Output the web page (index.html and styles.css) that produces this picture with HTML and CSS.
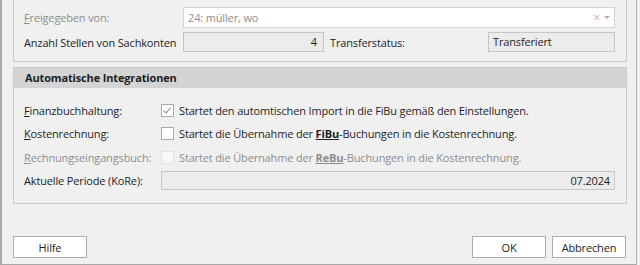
FILE: index.html
```html
<!DOCTYPE html>
<html lang="de">
<head>
  <meta charset="UTF-8" />
  <title>Transfer</title>
  <link rel="stylesheet" href="styles.css">
</head>
<body>
  <div class="window">
    <div class="group group-top">
      <div class="row">
        <label class="label disabled"><u>F</u>reigegeben von:</label>
        <div class="combo">
          <span class="combo-text">24: müller, wo</span>
          <span class="combo-clear">×</span>
          <span class="combo-arrow"></span>
        </div>
      </div>
      <div class="row">
        <label class="label">Anzahl Stellen von Sachkonten</label>
        <div class="field field-num">4</div>
        <label class="label-mid">Transferstatus:</label>
        <div class="field field-status">Transferiert</div>
      </div>
    </div>

    <div class="group group-auto">
      <div class="group-header">Automatische Integrationen</div>
      <div class="group-body">
        <div class="row row-check">
          <label class="label label-short"><u>F</u>inanzbuchhaltung:</label>
          <span class="check checked"></span>
          <span class="check-text">Startet den automtischen Import in die FiBu gemäß den Einstellungen.</span>
        </div>
        <div class="row row-check">
          <label class="label label-short"><u>K</u>ostenrechnung:</label>
          <span class="check"></span>
          <span class="check-text">Startet die Übernahme der <b><u>FiBu</u></b>-Buchungen in die Kostenrechnung.</span>
        </div>
        <div class="row row-check disabled">
          <label class="label label-short"><u>R</u>echnungseingangsbuch:</label>
          <span class="check check-off"></span>
          <span class="check-text">Startet die Übernahme der <b><u>ReBu</u></b>-Buchungen in die Kostenrechnung.</span>
        </div>
        <div class="row row-check">
          <label class="label label-short">Aktuelle Periode (KoRe):</label>
          <div class="field field-period">07.2024</div>
        </div>
      </div>
    </div>

    <div class="buttons">
      <button class="btn">Hilfe</button>
      <span class="spacer"></span>
      <button class="btn">OK</button>
      <button class="btn">Abbrechen</button>
    </div>
  </div>
</body>
</html>
```

FILE: styles.css
```css
html, body {
  margin: 0;
  padding: 0;
  background: #f0f0f0;
  font-family: "Open Sans", "Liberation Sans", sans-serif;
  font-size: 11px;
  letter-spacing: -0.15px;
  color: #1e1e1e;
}
.window {
  box-sizing: border-box;
  width: 637px;
  height: 265px;
  padding: 0 10px 0 11px;
  border-left: 2px solid #a8a8a8;
  border-right: 1px solid #b4b4b4;
  border-bottom: 1px solid #a8a8a8;
  background: #f0f0f0;
}
.group {
  box-sizing: border-box;
  width: 614px;
  border: 1px solid #cbcbcb;
}
.group-top {
  border-top: none;
  height: 62px;
  padding: 7px 11px 0 10px;
  display: flex;
  flex-direction: column;
  gap: 4px;
}
.row {
  display: flex;
  align-items: center;
}
.label {
  width: 159px;
  flex: none;
  white-space: nowrap;
}
.label-short {
  width: 137px;
}
.disabled,
.disabled .check-text {
  color: #8d8d8d;
}
.combo {
  box-sizing: border-box;
  flex: 1;
  height: 21px;
  display: flex;
  align-items: center;
  background: #fff;
  border: 1px solid #d2d2d2;
  padding: 0 4px 0 4px;
}
.combo-text {
  flex: 1;
  color: #8d8d8d;
}
.combo-clear {
  color: #e8a0a0;
  font-size: 12px;
  margin-right: 4px;
}
.combo-arrow {
  width: 0;
  height: 0;
  border-left: 3px solid transparent;
  border-right: 3px solid transparent;
  border-top: 3px solid #b0b0b0;
}
.field {
  box-sizing: border-box;
  height: 20px;
  line-height: 18px;
  border: 1px solid #c6c6c6;
  background: #ececec;
  padding: 0 4px;
}
.field-num {
  width: 141px;
  text-align: right;
  padding-right: 6px;
}
.label-mid {
  margin-left: 6px;
  width: 158px;
}
.field-status {
  flex: 1;
}
.group-auto {
  margin-top: 5px;
  height: 137px;
}
.group-header {
  height: 20px;
  line-height: 19px;
  background: #d4d4d4;
  font-weight: bold;
  padding-left: 11px;
}
.group-body {
  padding: 11px 11px 0 10px;
  display: flex;
  flex-direction: column;
}
.row-check {
  height: 23.3px;
}
.check {
  box-sizing: border-box;
  width: 13px;
  height: 13px;
  border: 1px solid #a9a9a9;
  background: #fff;
  margin-right: 5px;
  flex: none;
  position: relative;
}
.check.checked::after {
  content: "";
  position: absolute;
  left: 3px;
  top: 1px;
  width: 3px;
  height: 6px;
  border-right: 1px solid #8a8a8a;
  border-bottom: 1px solid #8a8a8a;
  transform: rotate(40deg);
}
.check-off {
  border-color: #e2e2e2;
  background: #f7f7f7;
}
.check-text b {
  font-weight: bold;
}
.field-period {
  flex: 1;
  height: 19px;
  line-height: 17px;
  text-align: right;
}
.buttons {
  display: flex;
  gap: 6px;
  margin-top: 32px;
}
.spacer {
  flex: 1;
}
.btn {
  box-sizing: border-box;
  width: 74px;
  height: 22px;
  background: #fff;
  border: 1px solid #adadad;
  font-family: inherit;
  font-size: 11px;
  letter-spacing: -0.15px;
  color: #1e1e1e;
  padding: 0;
}
```
